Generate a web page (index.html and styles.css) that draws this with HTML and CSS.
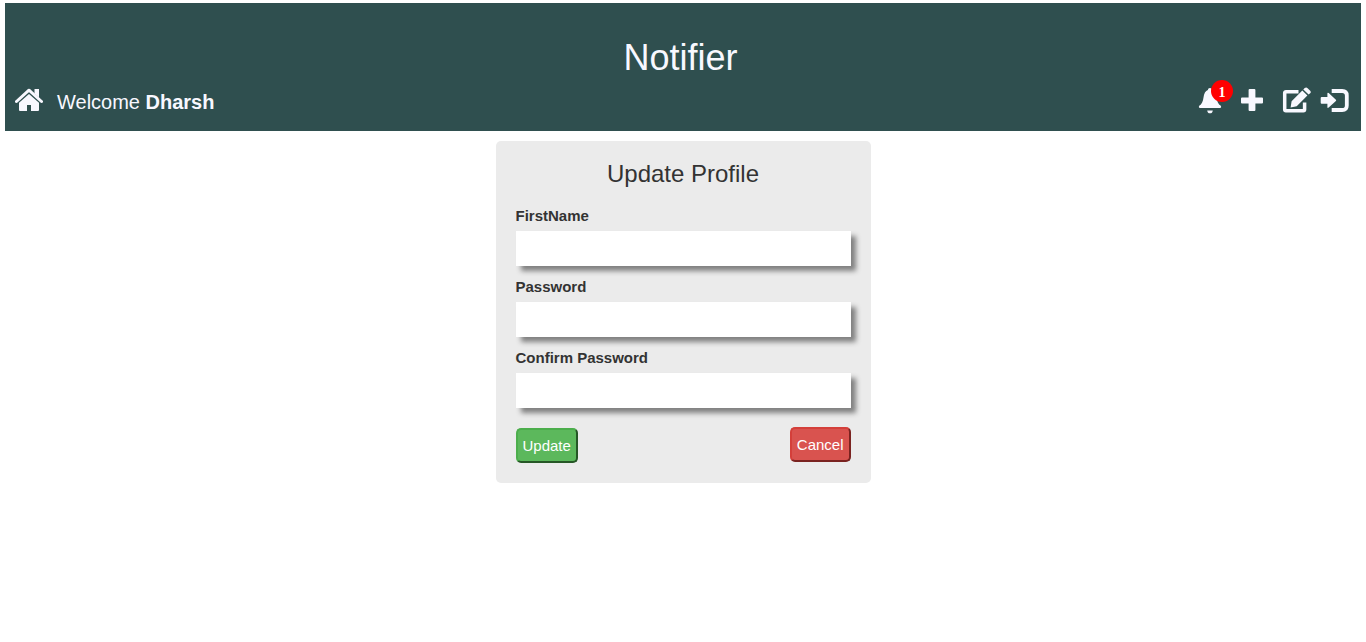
FILE: index.html
```html
<!DOCTYPE html>
<html lang="en">
<head>
<meta charset="utf-8">
<title>Notifier</title>
<link rel="stylesheet" href="styles.css">
</head>
<body>
<header class="header">
  <h1 class="brand">Notifier</h1>
  <div class="bar">
    <a class="home" aria-label="Home"><svg width="28" height="24" viewBox="0 0 28 24"><path d="M1.5 13.5 14 2.2 26.5 13.5" fill="none" stroke="currentColor" stroke-width="3" stroke-linecap="round" stroke-linejoin="round"/><path d="M19.5 1H24V9.5L19.5 5.5ZM14 6 24 14.8V22Q24 23 23 23H16V17H12V23H5Q4 23 4 22V14.8Z" fill="currentColor"/></svg></a>
    <span class="welcome">Welcome <b>Dharsh</b></span>
    <nav class="actions">
      <a class="bell" aria-label="Notifications"><svg width="24" height="28" viewBox="0 0 24 28"><path d="M12 1C13.3 1 14 1.8 14.1 3C16.6 3.9 18 6.4 18.5 10.4C19 14.4 20.2 17.2 22.8 18.8Q23.8 20.9 22 20.9H2Q.2 20.9 1.2 18.8C3.8 17.2 5 14.4 5.5 10.4C6 6.4 7.4 3.9 9.9 3C10 1.8 10.7 1 12 1ZM9.2 23.4H14.8Q14.4 26.3 12 26.3 9.6 26.3 9.2 23.4Z" fill="currentColor"/></svg><span class="badge">1</span></a>
      <a class="plus" aria-label="Add"><svg width="24" height="24" viewBox="0 0 24 24"><path d="M9.6 1H14.4Q15.4 1 15.4 2V9.6H22Q23 9.6 23 10.6V14.4Q23 15.4 22 15.4H15.4V22Q15.4 23 14.4 23H9.6Q8.6 23 8.6 22V15.4H2Q1 15.4 1 14.4V10.6Q1 9.6 2 9.6H8.6V2Q8.6 1 9.6 1Z" fill="currentColor"/></svg></a>
      <a class="edit" aria-label="Edit profile"><svg width="30" height="26" viewBox="0 0 30 26"><path d="M16.5 4.8H4Q2.7 4.8 2.7 6V22.6Q2.7 23.8 4 23.8H21.3Q22.6 23.8 22.6 22.6V15.5" fill="none" stroke="currentColor" stroke-width="3.5"/><path d="M8.6 20.4 9.6 14.2 20.3 3.4 25.4 8.4 14.7 19.2ZM21.3 2.4 22.7 1.1Q24.2-.1 25.6 1.2L28.2 3.7Q29.4 5 28.2 6.3L26.6 7.6Z" fill="currentColor"/></svg></a>
      <a class="login" aria-label="Log out"><svg width="30" height="26" viewBox="0 0 30 26"><path d="M1.7 9.9H7.4V6.5Q7.5 5.2 8.7 6.1L15.9 12.7Q16.5 13.3 15.9 13.9L8.7 20.6Q7.5 21.5 7.4 20.2V16.8H1.7Q.7 16.8.7 15.8V10.9Q.7 9.9 1.7 9.9Z" fill="currentColor"/><path d="M11.7 4H22.2Q26.8 4 26.8 8.6V18.4Q26.8 23 22.2 23H11.7" fill="none" stroke="currentColor" stroke-width="3.8"/></svg></a>
    </nav>
  </div>
</header>
<main class="card">
  <h2 class="card-title">Update Profile</h2>
  <form>
    <label class="label" for="first">FirstName</label>
    <input class="field" id="first" type="text">
    <label class="label" for="pass">Password</label>
    <input class="field" id="pass" type="password">
    <label class="label" for="confirm">Confirm Password</label>
    <input class="field" id="confirm" type="password">
    <div class="buttons">
      <button class="btn update" type="button">Update</button>
      <button class="btn cancel" type="button">Cancel</button>
    </div>
  </form>
</main>
</body>
</html>
```
FILE: styles.css
```css
* { box-sizing: border-box; }
body {
  margin: 0;
  padding: 3px 5px;
  background: #fff;
  color: #333;
  font-family: "Liberation Sans", Arial, sans-serif;
}
.header {
  height: 128px;
  padding-top: 35px;
  background: #2f4f4f;
  color: ghostwhite;
}
.brand {
  margin: 0;
  padding-right: 5px;
  font-size: 36px;
  font-weight: 400;
  line-height: 40px;
  text-align: center;
}
.bar {
  display: flex;
  align-items: flex-start;
  padding: 9px 11px 0 10px;
}
.bar svg { display: block; }
.home { padding-top: 1px; }
.welcome {
  margin-left: 14px;
  padding-top: 3px;
  font-size: 20px;
  line-height: 24px;
}
.actions {
  display: flex;
  align-items: flex-start;
  margin-left: auto;
}
.bell { position: relative; }
.badge {
  position: absolute;
  left: 13px;
  top: -7px;
  width: 22px;
  height: 22px;
  border-radius: 50%;
  background: red;
  color: #fff;
  font: 700 14px/25px "Liberation Serif", serif;
  text-align: center;
}
.plus { margin-left: 18px; padding-top: 1px; }
.edit { margin-left: 18px; }
.login { margin-left: 8px; }
.card {
  width: 375px;
  height: 342px;
  margin: 10px auto 0;
  padding: 20px;
  border-radius: 5px;
  background: #ebebeb;
}
.card-title {
  margin: 0 0 16px;
  font-size: 24px;
  font-weight: 400;
  line-height: 26px;
  text-align: center;
}
.label {
  display: block;
  padding: 3px 0 5px;
  font-size: 15px;
  font-weight: 700;
  line-height: 20px;
}
.field {
  display: block;
  width: 335px;
  height: 35px;
  margin-bottom: 8px;
  border: 0;
  background: #fff;
  box-shadow: 5px 5px 5px gray;
}
.buttons {
  display: flex;
  justify-content: space-between;
  padding-top: 11px;
}
.btn {
  height: 35px;
  padding: 0 5px;
  border: 2px solid;
  border-radius: 5px;
  color: #fff;
  font: 15px "Liberation Sans", Arial, sans-serif;
}
.update {
  margin-top: 1px;
  background: #5cb85c;
  border-color: #4cae4c #265726 #265726 #4cae4c;
}
.cancel {
  background: #d9534f;
  border-color: #d43f3a #7a2320 #7a2320 #d43f3a;
}
```
